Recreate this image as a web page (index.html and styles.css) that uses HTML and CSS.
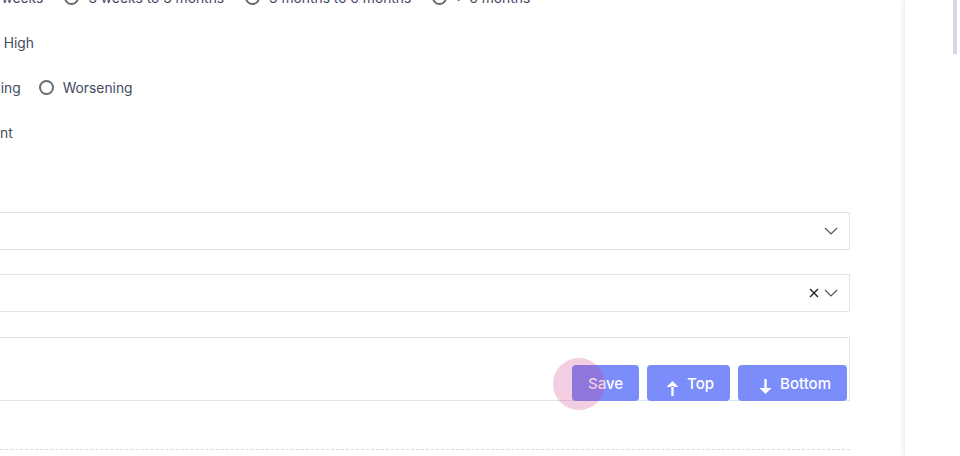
FILE: index.html
```html
<!DOCTYPE html>
<html lang="en">
<head>
    <meta charset="UTF-8">
    <meta name="viewport" content="width=device-width, initial-scale=1.0">
    <title>Assessment Form</title>
    <link rel="stylesheet" href="styles.css">
</head>
<body>
    <div class="page">
        <div class="main">
            <form class="form">
                <div class="question q-one">
                    <div class="q-label">Duration of symptoms</div>
                    <div class="q-options">
                        <label class="radio"><span class="dot"></span>&lt; 3 weeks</label>
                        <label class="radio"><span class="dot"></span>3 weeks to 3 months</label>
                        <label class="radio"><span class="dot"></span>3 months to 6 months</label>
                        <label class="radio"><span class="dot"></span>&gt; 6 months</label>
                    </div>
                </div>
                <div class="question q-two">
                    <div class="q-label">Severity</div>
                    <div class="q-options">
                        <label class="radio"><span class="dot"></span>Low</label>
                        <label class="radio"><span class="dot"></span>Medium</label>
                        <label class="radio"><span class="dot"></span>High</label>
                    </div>
                </div>
                <div class="question q-three">
                    <div class="q-label">Progression</div>
                    <div class="q-options">
                        <label class="radio"><span class="dot"></span>Improving</label>
                        <label class="radio"><span class="dot"></span>Unchanging</label>
                        <label class="radio"><span class="dot"></span>Worsening</label>
                    </div>
                </div>
                <div class="question q-four">
                    <div class="q-label">Status</div>
                    <div class="q-options">
                        <label class="radio"><span class="dot"></span>Absent</label>
                        <label class="radio"><span class="dot"></span>Present</label>
                    </div>
                </div>

                <div class="field first-field">
                    <div class="q-label">Category</div>
                    <div class="select">
                        <span class="select-value"></span>
                        <svg class="chevron" width="14" height="9" viewBox="0 0 14 9"><path d="M1 1l6 6 6-6" fill="none" stroke="#555" stroke-width="1.2"/></svg>
                    </div>
                </div>
                <div class="field">
                    <div class="q-label">Tags</div>
                    <div class="select">
                        <span class="select-value"></span>
                        <svg class="clear" width="10" height="10" viewBox="0 0 10 10"><path d="M1 1l8 8M9 1l-8 8" fill="none" stroke="#222" stroke-width="1.4"/></svg>
                        <svg class="chevron" width="14" height="9" viewBox="0 0 14 9"><path d="M1 1l6 6 6-6" fill="none" stroke="#555" stroke-width="1.2"/></svg>
                    </div>
                </div>
                <div class="field notes-field">
                    <div class="q-label">Notes</div>
                    <div class="notes">
                        <div class="actions">
                            <button type="button" class="btn">Save</button>
                            <button type="button" class="btn btn-icon btn-top">
                                <svg width="13" height="17" viewBox="0 0 13 17"><path d="M6.5 2L0.5 8h12z M5.3 7h2.4v10H5.3z" fill="#fff"/></svg>
                                Top
                            </button>
                            <button type="button" class="btn btn-icon">
                                <svg width="13" height="17" viewBox="0 0 13 17"><path d="M5.3 0h2.4v10H5.3z M0.5 9h12l-6 6z" fill="#fff"/></svg>
                                Bottom
                            </button>
                            <span class="ripple"></span>
                        </div>
                    </div>
                </div>
                <div class="divider"></div>
            </form>
        </div>
        <div class="sidebar">
            <div class="scroll-thumb"></div>
        </div>
    </div>
</body>
</html>
```

FILE: styles.css
```css
body {
    margin: 0;
    font-family: 'Inter', 'Roboto', sans-serif;
    background-color: #ffffff;
    overflow: hidden;
}
.page {
    display: flex;
    height: 456px;
}
.main {
    width: 905px;
    flex-shrink: 0;
    overflow: hidden;
}
.form {
    margin-left: -300px;
    margin-top: -25px;
    padding-right: 55px;
}
.question {
    display: flex;
    align-items: center;
    height: 45px;
}
.q-label {
    width: 200px;
    flex-shrink: 0;
    font-size: 13px;
    color: #434a5f;
}
.q-options {
    display: flex;
    align-items: center;
    gap: 18px;
}
.q-one .q-options {
    margin-left: 52px;
    gap: 21px;
}
.q-two .q-options {
    margin-left: -84px;
}
.q-three .q-options {
    margin-left: -89px;
}
.q-four .q-options {
    margin-left: -49px;
}
.radio {
    display: flex;
    align-items: center;
    gap: 9px;
    font-size: 13.8px;
    color: #434a5f;
    white-space: nowrap;
}
.dot {
    width: 11px;
    height: 11px;
    border: 2px solid #6b6b6b;
    border-radius: 50%;
}
.field {
    display: flex;
    align-items: flex-start;
    margin-top: 24px;
}
.first-field {
    margin-top: 57px;
}
.notes-field {
    margin-top: 25px;
}
.select {
    flex: 1;
    height: 36px;
    border: 1px solid #e2e4ec;
    display: flex;
    align-items: center;
    justify-content: flex-end;
    padding-right: 11px;
    gap: 5px;
}
.select-value {
    flex: 1;
}
.notes {
    flex: 1;
    height: 62px;
    border: 1px solid #e2e4ec;
    position: relative;
}
.actions {
    position: absolute;
    right: 2px;
    bottom: -1px;
    display: flex;
    gap: 8px;
}
.btn {
    height: 36px;
    border: none;
    border-radius: 4px;
    background-color: #7b8dfb;
    color: #ffffff;
    font-family: 'Inter', sans-serif;
    font-size: 15px;
    font-weight: 500;
    padding: 0 16px;
    display: flex;
    align-items: center;
    gap: 8px;
}
.btn-icon {
    padding-left: 21px;
}
.btn-top {
    padding-left: 19px;
}
.btn svg {
    margin-top: 8px;
}
.ripple {
    position: absolute;
    left: -19px;
    top: -7px;
    width: 52px;
    height: 52px;
    border-radius: 50%;
    background-color: rgba(205, 45, 125, 0.24);
}
.divider {
    margin-top: 48px;
    margin-left: 200px;
    border-top: 1px dashed #d9d9e3;
}
.sidebar {
    flex: 1;
    position: relative;
    background-color: #ffffff;
    box-shadow: -2px 0 5px rgba(0, 0, 0, 0.08);
}
.scroll-thumb {
    position: absolute;
    right: 3px;
    top: 0;
    width: 4px;
    height: 54px;
    background-color: #d2d7ea;
}
```
